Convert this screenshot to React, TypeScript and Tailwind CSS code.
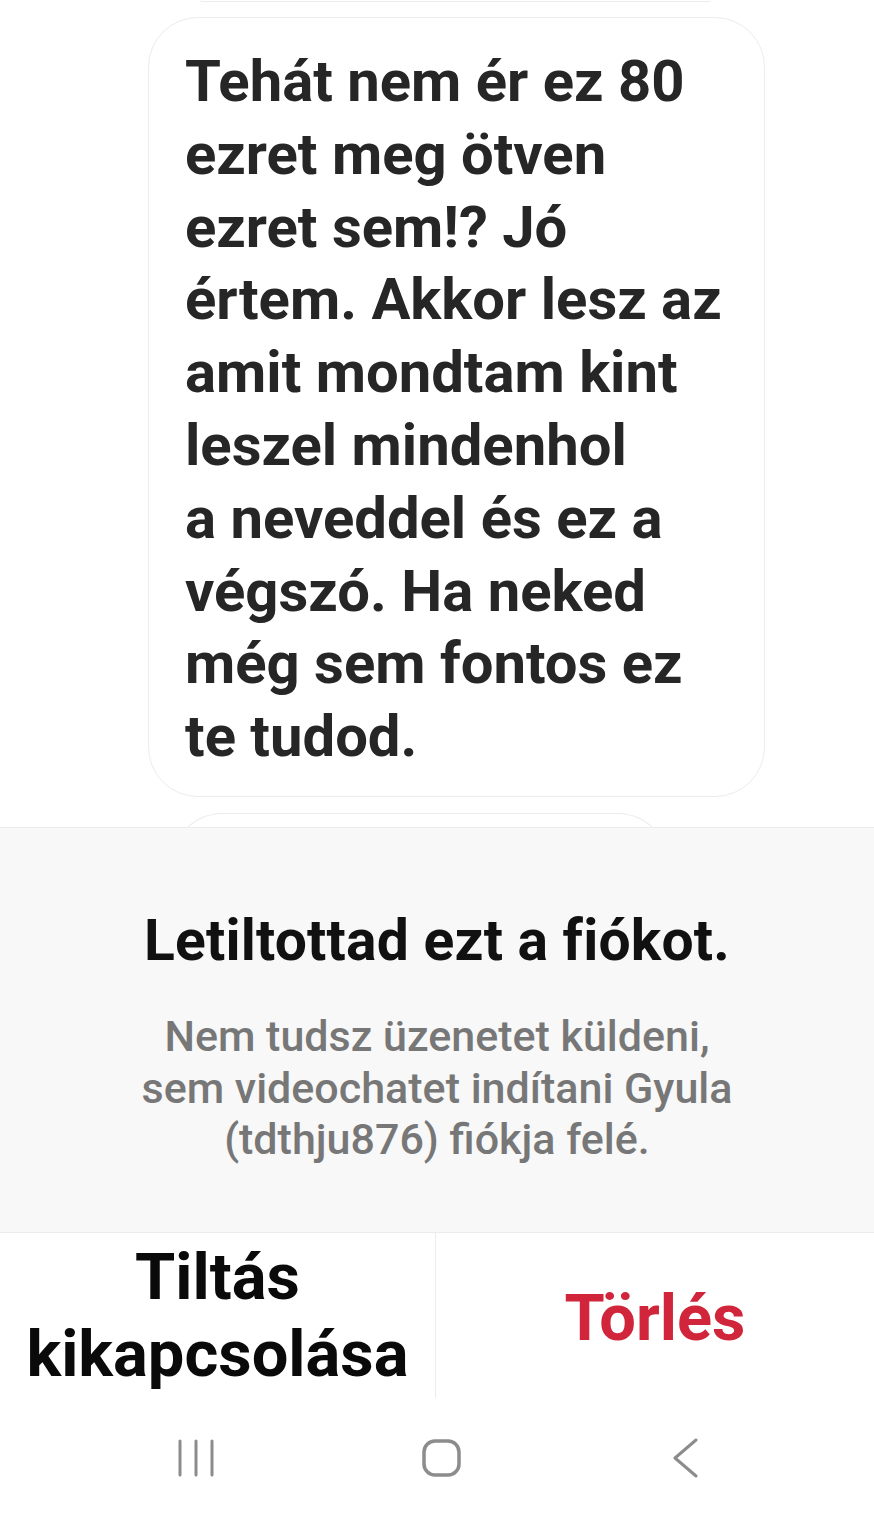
const bubbleLines = [
  'Tehát nem ér ez 80',
  'ezret meg ötven',
  'ezret sem!? Jó',
  'értem. Akkor lesz az',
  'amit mondtam kint',
  'leszel mindenhol',
  'a neveddel és ez a',
  'végszó. Ha neked',
  'még sem fontos ez',
  'te tudod.',
]

export default function App() {
  return (
    <div className="w-[874px] h-[1514px] bg-white flex flex-col overflow-hidden font-['Roboto',sans-serif]">
      {/* chat area */}
      <div className="h-[827px] shrink-0 flex flex-col items-start overflow-hidden">
        <div className="shrink-0 ml-[200px] w-[511px] h-[2px] border-b border-[#ececec] rounded-b-[40px]" />
        <div className="shrink-0 ml-[148px] mt-[15px] w-[617px] h-[780px] rounded-[50px] border border-[#ececec] pl-[36px] pt-[27px]">
          {bubbleLines.map((line) => (
            <div key={line} className="text-[58px] leading-[72.8px] font-bold text-[#262626] whitespace-nowrap">
              {line}
            </div>
          ))}
        </div>
        <div className="shrink-0 ml-[172px] mt-[16px] w-[496px] h-[60px] rounded-t-[50px] border-t border-x border-[#ececec]" />
      </div>

      {/* blocked notice */}
      <div className="h-[406px] shrink-0 bg-[#f8f8f8] border-y border-[#ececec] flex flex-col items-center pt-[83px]">
        <div className="text-[57px] leading-[60px] font-bold text-[#111] tracking-[0.2px] whitespace-nowrap">
          Letiltottad ezt a fiókot.
        </div>
        <div className="mt-[40px] text-[43px] leading-[51.5px] font-medium text-[#777] text-center whitespace-nowrap">
          Nem tudsz üzenetet küldeni,
          <br />
          sem videochatet indítani Gyula
          <br />
          (tdthju876) fiókja felé.
        </div>
      </div>

      {/* actions */}
      <div className="h-[165px] shrink-0 flex">
        <div className="w-[436px] border-r border-[#ececec] flex items-center justify-center">
          <div className="text-[65px] leading-[77px] font-bold text-[#0a0a0a] text-center whitespace-nowrap">
            Tiltás
            <br />
            kikapcsolása
          </div>
        </div>
        <div className="flex-1 flex items-center justify-center pt-[6px]">
          <div className="text-[65px] leading-[77px] font-bold text-[#d1253b]">Törlés</div>
        </div>
      </div>

      {/* system nav bar */}
      <div className="flex-1 flex items-center justify-between pl-[176px] pr-[169px] pt-[4px]">
        <svg width="40" height="38" viewBox="0 0 40 38" className="text-[#8c8c8c]">
          <path d="M4 2v34M20 2v34M36 2v34" stroke="currentColor" strokeWidth="3" strokeLinecap="round" />
        </svg>
        <svg width="40" height="38" viewBox="0 0 40 38" className="text-[#8c8c8c]">
          <rect x="3" y="2" width="35" height="34" rx="11" fill="none" stroke="currentColor" strokeWidth="3.5" />
        </svg>
        <svg width="40" height="40" viewBox="0 0 40 40" className="text-[#8c8c8c]">
          <path d="M31 2L10 20l21 18" fill="none" stroke="currentColor" strokeWidth="3" strokeLinecap="round" strokeLinejoin="round" />
        </svg>
      </div>
    </div>
  )
}
